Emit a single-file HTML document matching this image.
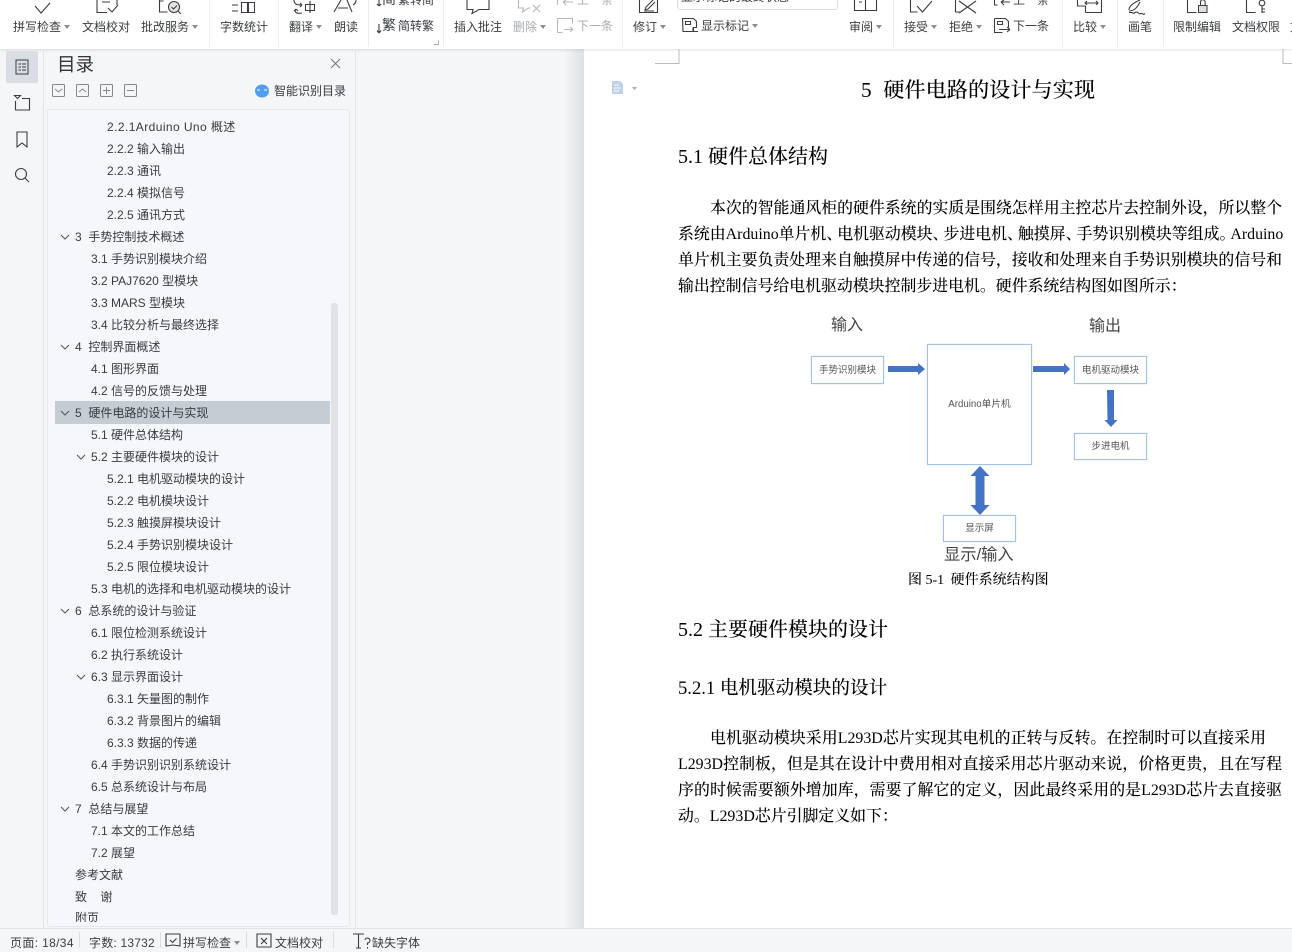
<!DOCTYPE html>
<html lang="zh"><head><meta charset="utf-8"><style>
html,body{margin:0;padding:0;width:1292px;height:952px;overflow:hidden;background:#f5f6f8}
body{position:relative;font-family:"Liberation Sans","Noto Sans CJK SC",sans-serif}
.a{position:absolute;white-space:nowrap}
.t{position:absolute;white-space:nowrap;font-size:12px;line-height:16px;color:#383b40}
.r{position:absolute;white-space:nowrap;font-size:12px;line-height:16px;color:#3a3d42;top:19px}
.g{color:#a8abb0}
.c{display:inline-block;width:0;height:0;border:3px solid transparent;border-top:4px solid #8a8d93;border-bottom:0;margin-left:3px;vertical-align:2px}
.s{position:absolute;top:0;height:47px;width:1px;background:#ededed}
.p{position:absolute;white-space:nowrap;font-family:"Liberation Serif","Noto Serif CJK SC",serif;font-size:15.9px;line-height:26px;color:#000;text-align:justify;text-align-last:justify;font-weight:500}
.h{position:absolute;white-space:nowrap;font-family:"Liberation Serif","Noto Serif CJK SC",serif;color:#000;font-weight:500}
.d{position:absolute;white-space:nowrap;font-family:"Liberation Sans","Noto Sans CJK SC",sans-serif;color:#444;text-align:center}
.b{position:absolute;box-sizing:border-box;border:1px solid #a3c2e6;box-shadow:0 0 1px #bdd3ec;background:#fff;text-align:center;font-size:9.5px;color:#555}
svg{position:absolute;overflow:visible}
.i{fill:none;stroke:#3a3d42;stroke-width:1.1}
.ig{fill:none;stroke:#b5b7bb;stroke-width:1.1}
.sb{position:absolute;top:935px;white-space:nowrap;font-size:12px;line-height:16px;color:#3a3d42}
.x{letter-spacing:-5px}
</style></head><body>

<!-- document area -->
<div class="a" style="left:584px;top:49px;width:708px;height:879px;background:#fff"></div>
<div class="a" style="left:564px;top:49px;width:20px;height:879px;background:linear-gradient(90deg,#f5f6f8,#dfe0e3)"></div>

<!-- ribbon -->
<div class="a" style="left:0;top:0;width:1292px;height:49px;background:#fff;box-shadow:0 1px 3px rgba(0,0,0,.12)"></div>
<div class="s" style="left:209px"></div><div class="s" style="left:278px"></div><div class="s" style="left:368px"></div><div class="s" style="left:443px"></div><div class="s" style="left:622px"></div><div class="s" style="left:893px"></div><div class="s" style="left:1062px"></div><div class="s" style="left:1117px"></div><div class="s" style="left:1163px"></div>

<svg style="left:0;top:0" width="1292" height="49">
<path class="i" d="M35 6l6 7 9-10"/>
<path class="i" d="M97 0v12.500h10M117 0v5M108 8l4 4 6-7M102 2h8"/>
<path class="i" d="M159.500 0v12h8M159.500 1h4"/><circle cx="174" cy="7" r="5.500" fill="#e3e4e6" stroke="#3a3d42" stroke-width="1.100"/><path class="i" d="M178 11l3 3M171.500 7l2 2 3.500-3.500"/>
<path class="i" d="M232 5h6M232 11h6M241.500 2.500h6v10h-6zM248.500 2.500h6v10h-6z"/>
<path class="i" d="M294 0c0 4 2 5 8 5M302 5l-2-2M302 5l-2 2M296 9c-2 3 0 5 6 4M296 9l-2 2M296 9l2 2M305.500 4.500h9v6h-9zM310 1v12"/>
<path class="i" d="M334 12l7-12M347 0l5 12M338 8h10M353 5c2-1 3-3 3-5"/>
<path class="i" d="M379 0v6M379 6l-2-2M379 6l2-2"/>
<path class="i" d="M379 24v9M379 33l-2-2.500M379 33l2-2.500"/>
<path class="i" d="M467 0v9.500h6l-1 4 7-4h10V0"/>
<path class="ig" d="M518.500 0v8h5l-1 4 6-4h2M533 5l7 7M540 5l-7 7"/>
<path class="ig" d="M557.500 0v5M563 2h10M563 2l3-2M563 2l3 3"/>
<path class="ig" d="M557.500 18.500h15v5M557.500 18.500v14h5M564 29.500h9M573 29.500l-3-2.500M573 29.500l-3 2.500"/>
<path class="i" d="M639.500 0v12.500h18V0M645 10l1-3 7-7M645 10l3-1 7-7M644 11h10"/>
<path class="i" d="M682.500 18.500h11l3 3v6h-3v4h-10.500zM685.500 21.500h5v3h-5zM693 27.500v4h5"/>
<path class="i" d="M854.500 0v10.500h22V0M865.500 0v10.500M859 2h3"/>
<path class="i" d="M910.500 0v12h7M917 6l5.500 6 9.500-11"/>
<path class="i" d="M955.500 0v12h4M959 1l17 12M976 1l-17 12"/>
<path class="i" d="M994.500 0v5h3M1001 2h9M1001 2l3-2M1001 2l3 3"/>
<path class="i" d="M994.500 18.500h11l3 3v6M994.500 18.500v14h8M997.500 21.500h5v3h-5zM999 29.500h11M1010 29.500l-3-2.500M1010 29.500l-3 2.500"/>
<path class="i" d="M1077.500 0v6h8M1085.500 12.500h16V0M1085 3h13M1096 1l2 2-2 2M1087 1l-2 2 2 2M1085.500 6v6.500"/>
<path class="i" d="M1129 10c0-4 4-7 11-10M1129 11c5 0 8-3 11-9M1129 12.500h3c1 1 2 1 3 0 2-1 3 0 4 1s2-1 3 0 2 1 3 0"/>
<path class="i" d="M1187.500 0v12.500h9"/><rect x="1198.500" y="5.500" width="8.500" height="7" fill="#ddd" stroke="#3a3d42"/><path class="i" d="M1200.500 5V2a2.300 2.300 0 0 1 4.600 0v3"/>
<path class="i" d="M1246.500 0v12.500h9"/><circle class="i" cx="1262" cy="3" r="2.800"/><path class="i" d="M1262 6v7M1262 9h3M1262 12h3"/>
<path d="M434 44.500h4.500v-4" stroke="#aaa" fill="none"/>
</svg>
<div class="a" style="left:33px;top:-8px;font-size:10px;line-height:12px;color:#666">abc</div>
<div class="a" style="left:382px;top:-8px;font-size:14px;line-height:15px;color:#3a3d42">简</div>
<div class="a" style="left:382px;top:17px;font-size:14px;line-height:16px;color:#3a3d42">繁</div>

<div class="r" style="left:13px">拼写检查<i class="c"></i></div>
<div class="r" style="left:82px">文档校对</div>
<div class="r" style="left:141px">批改服务<i class="c"></i></div>
<div class="r" style="left:220px">字数统计</div>
<div class="r" style="left:289px">翻译<i class="c"></i></div>
<div class="r" style="left:334px">朗读</div>
<div class="r" style="left:398px;top:-8px">繁转简</div>
<div class="r" style="left:398px;top:18px">简转繁</div>
<div class="r" style="left:454px">插入批注</div>
<div class="r g" style="left:513px">删除<i class="c"></i></div>
<div class="r g" style="left:577px;top:-8px">上一条</div>
<div class="r g" style="left:577px;top:18px">下一条</div>
<div class="r" style="left:633px">修订<i class="c"></i></div>
<div class="a" style="left:677px;top:-14px;width:161px;height:24px;box-sizing:border-box;border:1px solid #dcdcdc;border-radius:3px;font-size:12px;line-height:20px;color:#3a3d42;padding-left:3px">显示标记的最终状态</div>
<div class="r" style="left:701px;top:18px">显示标记<i class="c"></i></div>
<div class="r" style="left:849px">审阅<i class="c"></i></div>
<div class="r" style="left:904px">接受<i class="c"></i></div>
<div class="r" style="left:949px">拒绝<i class="c"></i></div>
<div class="r" style="left:1013px;top:-8px">上一条</div>
<div class="r" style="left:1013px;top:18px">下一条</div>
<div class="r" style="left:1073px">比较<i class="c"></i></div>
<div class="r" style="left:1128px">画笔</div>
<div class="r" style="left:1173px">限制编辑</div>
<div class="r" style="left:1232px">文档权限</div>
<div class="r" style="left:1290px">文</div>

<!-- left rail -->
<div class="a" style="left:43px;top:49px;width:1px;height:879px;background:#e3e4e6"></div>
<div class="a" style="left:6px;top:51px;width:32px;height:32px;border-radius:2px;background:#dadde3"></div>
<svg style="left:0;top:49px" width="44" height="150">
<path d="M16 11h12v14h-12zM18.500 15h2.500M22 15h4M18.500 18h2.500M22 18h4M18.500 21h2.500M22 21h4" fill="none" stroke="#3a3d42"/>
<path class="i" d="M14.500 46.500h6l-3 3zM22 49.500h7.500v11.500h-14v-9"/>
<path class="i" d="M17 83h10v15l-5-4-5 4z"/>
<circle class="i" cx="21" cy="125" r="5.500"/><path class="i" d="M25 129l4 4"/>
</svg>

<!-- toc panel -->
<div class="a" style="left:355px;top:49px;width:1px;height:879px;background:#e3e4e6"></div>
<div class="a" style="left:57px;top:52px;font-size:18.500px;line-height:26px;color:#333">目录</div>
<svg style="left:0;top:49px" width="355" height="60">
<path d="M331 10l9 9M340 10l-9 9" stroke="#777" fill="none"/>
<g fill="none" stroke="#888"><rect x="52.500" y="35.500" width="12" height="12" rx="1"/><rect x="76.500" y="35.500" width="12" height="12" rx="1"/><rect x="100.500" y="35.500" width="12" height="12" rx="1"/><rect x="124.500" y="35.500" width="12" height="12" rx="1"/><path d="M55 40l3.500 3 3.500-3M79 43l3.500-3 3.500 3M103 41.500h7M106.500 38v7M127 41.500h7"/></g>
<ellipse cx="262" cy="42" rx="7" ry="6.500" fill="#519cf4"/><path d="M257 41h3M264 41h3" stroke="#fff"/>
</svg>
<div class="t" style="left:274px;top:83px">智能识别目录</div>
<div class="a" style="left:47px;top:109px;width:303px;height:818px;box-sizing:border-box;border:1px solid #e6e7ea;border-radius:3px;background:#f6f7fa"></div>
<div class="a" style="left:55px;top:401px;width:275px;height:23px;background:#c5ccd3"></div>
<div class="a" style="left:331px;top:303px;width:7px;height:612px;border-radius:3px;background:#e0e2e5"></div>

<div style="position:absolute;left:0;top:1px">
<div class="t" style="left:107px;top:118px;letter-spacing:.42px">2.2.1Arduino Uno 概述</div>
<div class="t" style="left:107px;top:140px">2.2.2 输入输出</div>
<div class="t" style="left:107px;top:162px">2.2.3 通讯</div>
<div class="t" style="left:107px;top:184px">2.2.4 模拟信号</div>
<div class="t" style="left:107px;top:206px">2.2.5 通讯方式</div>
<div class="t" style="left:75px;top:228px">3&nbsp; 手势控制技术概述</div>
<div class="t" style="left:91px;top:250px">3.1 手势识别模块介绍</div>
<div class="t" style="left:91px;top:272px">3.2 PAJ7620 型模块</div>
<div class="t" style="left:91px;top:294px">3.3 MARS 型模块</div>
<div class="t" style="left:91px;top:316px">3.4 比较分析与最终选择</div>
<div class="t" style="left:75px;top:338px">4&nbsp; 控制界面概述</div>
<div class="t" style="left:91px;top:360px">4.1 图形界面</div>
<div class="t" style="left:91px;top:382px">4.2 信号的反馈与处理</div>
<div class="t" style="left:75px;top:404px">5&nbsp; 硬件电路的设计与实现</div>
<div class="t" style="left:91px;top:426px">5.1 硬件总体结构</div>
<div class="t" style="left:91px;top:448px">5.2 主要硬件模块的设计</div>
<div class="t" style="left:107px;top:470px">5.2.1 电机驱动模块的设计</div>
<div class="t" style="left:107px;top:492px">5.2.2 电机模块设计</div>
<div class="t" style="left:107px;top:514px">5.2.3 触摸屏模块设计</div>
<div class="t" style="left:107px;top:536px">5.2.4 手势识别模块设计</div>
<div class="t" style="left:107px;top:558px">5.2.5 限位模块设计</div>
<div class="t" style="left:91px;top:580px">5.3 电机的选择和电机驱动模块的设计</div>
<div class="t" style="left:75px;top:602px">6&nbsp; 总系统的设计与验证</div>
<div class="t" style="left:91px;top:624px">6.1 限位检测系统设计</div>
<div class="t" style="left:91px;top:646px">6.2 执行系统设计</div>
<div class="t" style="left:91px;top:668px">6.3 显示界面设计</div>
<div class="t" style="left:107px;top:690px">6.3.1 矢量图的制作</div>
<div class="t" style="left:107px;top:712px">6.3.2 背景图片的编辑</div>
<div class="t" style="left:107px;top:734px">6.3.3 数据的传递</div>
<div class="t" style="left:91px;top:756px">6.4 手势识别识别系统设计</div>
<div class="t" style="left:91px;top:778px">6.5 总系统设计与布局</div>
<div class="t" style="left:75px;top:800px">7&nbsp; 总结与展望</div>
<div class="t" style="left:91px;top:822px">7.1 本文的工作总结</div>
<div class="t" style="left:91px;top:844px">7.2 展望</div>
<div class="t" style="left:75px;top:866px">参考文献</div>
<div class="t" style="left:75px;top:888px">致&nbsp; &nbsp; 谢</div>
<div class="t" style="left:75px;top:909px;height:12px;overflow:hidden">附页</div>
</div>
<svg style="left:0;top:0" width="100" height="952"><g fill="none" stroke="#555">
<path d="M61 235l4 4 4-4M61 345l4 4 4-4M61 411l4 4 4-4M61 609l4 4 4-4M61 807l4 4 4-4M77 455l4 4 4-4M77 675l4 4 4-4"/></g></svg>

<!-- document -->
<svg style="left:0;top:0" width="1292" height="100"><path d="M655 63.500h24V49" fill="none" stroke="#bbb"/><path d="M1292 63.500h-9V49" fill="none" stroke="#bbb"/>
<path d="M612 81h8l3 3v10h-11z" fill="#bed0ea"/><path d="M614 85h5M614 88h7M614 91h5" stroke="#fff"/><path d="M632 87h5l-2.500 3z" fill="#aaa"/></svg>
<div class="h" style="left:861px;top:76px;font-size:21.200px;line-height:28px">5<span style="margin-left:1px">&nbsp; </span>硬件电路的设计与实现</div>
<div class="h" style="left:678px;top:144px;font-size:20px;line-height:26px">5.1 硬件总体结构</div>
<div class="p" style="left:710px;top:196px;width:572px">本次的智能通风柜的硬件系统的实质是围绕怎样用主控芯片去控制外设，所以整个</div>
<div class="p" style="left:678px;top:222px;width:604px">系统由Arduino单片机<span class="x">、</span>电机驱动模块<span class="x">、</span>步进电机<span class="x">、</span>触摸屏<span class="x">、</span>手势识别模块等组成<span class="x">。</span>Arduino</div>
<div class="p" style="left:678px;top:248px;width:604px">单片机主要负责处理来自触摸屏中传递的信号，接收和处理来自手势识别模块的信号和</div>
<div class="p" style="left:678px;top:274px;text-align-last:left">输出控制信号给电机驱动模块控制步进电机。硬件系统结构图如图所示：</div>

<!-- diagram -->
<div class="d" style="left:831px;top:315px;font-size:16px;line-height:22px">输入</div>
<div class="d" style="left:1089px;top:316px;font-size:16px;line-height:22px">输出</div>
<div class="b" style="left:811px;top:356px;width:73px;height:28px;line-height:27px">手势识别模块</div>
<div class="b" style="left:927px;top:344px;width:105px;height:121px;line-height:120px;font-size:9.700px">Arduino单片机</div>
<div class="b" style="left:1074px;top:356px;width:73px;height:28px;line-height:27px">电机驱动模块</div>
<div class="b" style="left:1074px;top:433px;width:73px;height:27px;line-height:26px">步进电机</div>
<div class="b" style="left:943px;top:515px;width:73px;height:27px;line-height:26px">显示屏</div>
<svg style="left:0;top:0" width="1292" height="560"><g fill="#4472c4">
<path d="M888 366h30v-3l7 6-7 6v-3h-30z"/>
<path d="M1033 366h31v-3l6 6-6 6v-3h-31z"/>
<path d="M1107 390h7v30h3.500l-6.500 7-6.500-7h3z"/>
<path d="M980 466l9.500 10h-5v29h5l-9.500 10-9.500-10h5v-29h-5z"/>
</g></svg>
<div class="d" style="left:944px;top:544px;font-size:16.300px;line-height:22px">显示/输入</div>
<div class="h" style="left:908px;top:571px;font-size:14px;line-height:20px">图 5-1<span style="margin-left:3px"> </span>硬件系统结构图</div>

<div class="h" style="left:678px;top:617px;font-size:20px;line-height:26px">5.2 主要硬件模块的设计</div>
<div class="h" style="left:678px;top:676px;font-size:18.600px;line-height:26px">5.2.1 电机驱动模块的设计</div>
<div class="p" style="left:710px;top:726px;width:556px">电机驱动模块采用L293D芯片实现其电机的正转与反转。在控制时可以直接采用</div>
<div class="p" style="left:678px;top:752px;width:604px">L293D控制板，但是其在设计中费用相对直接采用芯片驱动来说，价格更贵，且在写程</div>
<div class="p" style="left:678px;top:778px;width:604px">序的时候需要额外增加库，需要了解它的定义，因此最终采用的是L293D芯片去直接驱</div>
<div class="p" style="left:678px;top:804px;text-align-last:left">动。L293D芯片引脚定义如下：</div>

<!-- status bar -->
<div class="a" style="left:0;top:928px;width:1292px;height:24px;background:#f5f6f8;border-top:1px solid #e3e4e6;box-sizing:border-box"></div>
<div class="sb" style="left:10px;letter-spacing:.35px">页面: 18/34</div>
<div class="sb" style="left:89px;letter-spacing:.2px">字数: 13732</div>
<div class="sb" style="left:183px">拼写检查<i class="c"></i></div>
<div class="sb" style="left:275px">文档校对</div>
<div class="sb" style="left:372px">缺失字体</div>
<svg style="left:0;top:928px" width="400" height="24">
<path d="M79.500 4v16M160.500 4v16M246.500 4v16M333.500 4v16" stroke="#dcdde0"/>
<path class="i" d="M166 6h14v12l-7-1-7 1zM170 12l2.500 2.500 4-4"/>
<path class="i" d="M257 6h14v13h-14zM261 10l6 6M267 10l-6 6"/>
<path class="i" d="M353 6h11M358.500 6v14M356 20h5M365 12a2.500 2.500 0 1 1 2.500 3v2M367.500 19v1.500"/>
</svg>
</body></html>
